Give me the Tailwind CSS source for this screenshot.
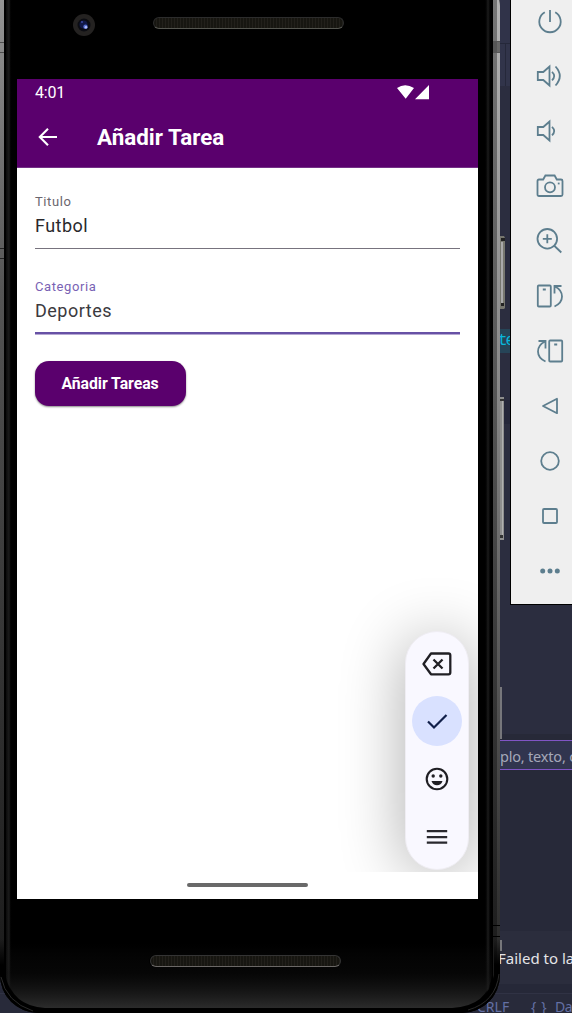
<!DOCTYPE html>
<html lang="es">
<head>
<meta charset="utf-8">
<title>Añadir Tarea</title>
<script src="https://cdn.jsdelivr.net/npm/@tailwindcss/browser@4"></script>
</head>
<body class="relative h-[1013px] w-[572px] overflow-hidden bg-[#282a3a] font-['Roboto',sans-serif]">

<!-- Editor behind the emulator -->
<div class="absolute inset-0 flex flex-col">
  <div class="h-[43px] shrink-0 bg-[#303349]"></div>
  <div class="flex h-[43px] shrink-0 justify-end border-t border-[#25283a] bg-[#31344a]"><div class="mr-[66px] border-l border-[#25283a]"></div></div>
  <div class="h-[243px] shrink-0 bg-[#2b2d3f]"></div>
  <div class="h-6 shrink-0 bg-[#264457] pl-[498px] font-['Liberation_Mono',monospace] text-[16px] leading-6 tracking-[-2px] text-[#08b7da]">te</div>
  <div class="h-[47px] shrink-0 bg-[#2b2d3f]"></div>
  <div class="h-6 shrink-0 bg-[#25273a]"></div>
  <div class="h-[310px] shrink-0 bg-[#2b2d3f]"></div>
  <div class="h-[6px] shrink-0 bg-[#272938]"></div>
  <div class="h-[30px] shrink-0 overflow-hidden whitespace-nowrap border-y border-[#8055c5] bg-[#31354f] pl-[500px] font-['Noto_Sans',sans-serif] text-[14.5px] leading-[30px] tracking-[-0.2px] text-[#a5a8b9]">plo, texto, c</div>
  <div class="h-[161px] shrink-0 bg-[#272939]"></div>
  <div class="h-[53px] shrink-0 overflow-hidden whitespace-nowrap bg-[#2b2d3d] pl-[498px] font-['Noto_Sans',sans-serif] text-[15px] leading-[55px] text-[#e4e4e7]">Failed to la</div>
  <div class="h-[9px] shrink-0 bg-[#262838]"></div>
  <div class="flex h-[20px] shrink-0 overflow-hidden whitespace-nowrap border-t border-[#303244] bg-[#282a3a] pl-[477px] font-['Noto_Sans',sans-serif] text-[14px] leading-[25px] text-[#6470a4]"><span class="w-[54px]">CRLF</span><span class="w-[24px] tracking-[5px]">{}</span><span class="tracking-[-0.5px]">Da</span></div>
</div>
<div class="absolute left-[500px] top-[687px] h-[52px] w-[2px] bg-[#77777b]"></div>
<div class="absolute left-[500px] top-[940px] h-[11px] w-[2px] bg-[#77777b]"></div>

<!-- Hardware buttons -->
<svg class="absolute left-[499px] top-[236px] h-[74px] w-[6px]" viewBox="0 0 6 74"><path fill="#77776f" d="M0 0h5l1 2v70l-1 1H0z"/><path fill="#aaa" d="M2 6h2v61H2z"/><path fill="#222" d="M2 2h4v3H2zM2 67h3v3H2z"/></svg>
<svg class="absolute left-[499px] top-[397px] h-[144px] w-[5px]" viewBox="0 0 5 144"><path fill="#8e8e8e" d="M0 0h5v143H0z"/><path fill="#b0b0b0" d="M3 4h1v134H3z"/><path fill="#333" d="M0 2h5v2H0zM0 138h4v3H0z"/></svg>

<!-- Phone -->
<div class="absolute left-0 top-[-20px] flex h-[1033px] w-[500px] overflow-hidden rounded-tr-[26px] rounded-b-[38px] bg-black">
  <div class="flex w-[17px] shrink-0">
    <div class="w-[4px] bg-linear-to-b from-[#999] via-[#555] via-30% to-[#181818]"><div class="mt-[62px] h-[11px] border-y border-[#333]/70"></div><div class="mt-[195px] h-[11px] border-y border-[#222]"></div></div>
    <div class="w-[2px] bg-black"></div>
    <div class="w-[6px] bg-linear-to-r from-[#0b0b0b] via-[#1c1c1c] to-black"></div>
  </div>
  <div class="flex w-[461px] flex-col">
    <div class="flex h-[99px] shrink-0 pl-[56px]">
      <div class="mt-[34px] flex size-[22px] items-center justify-center rounded-full bg-[#242221]"><svg class="size-[14px]" viewBox="0 0 14 14"><circle cx="7" cy="7" r="6.5" fill="#0b0c12"/><circle cx="6.5" cy="6.5" r="4" fill="#111846"/><circle cx="5" cy="4" r="1" fill="#3a49a4"/><circle cx="8.5" cy="8.8" r="2.2" fill="#536bd0"/><circle cx="9" cy="9.3" r="1.3" fill="#b3c0fb"/></svg></div>
      <div class="ml-[58px] mt-[37px] h-[12px] w-[191px] rounded-full border border-[#2c2c2c] border-b-[#555650] bg-[repeating-linear-gradient(90deg,#171611_0px,#171611_2px,#22201b_2px,#22201b_3px)]"></div>
    </div>
    <div class="flex h-[820px] shrink-0 flex-col bg-white">
      <div class="flex h-[89px] shrink-0 flex-col border-b border-[#743087] bg-[#5a006d] text-white">
        <div class="flex h-[26px] items-center pl-[18px] text-[16px]"><span class="w-[362px] pt-px tracking-[-0.2px]">4:01</span>
          <svg class="h-[16px] w-[34px]" viewBox="0 0 34 16" fill="#fff"><path d="M0 4Q8-1.6 17 4L8.7 14.8zM18 15.3 32 1v14.3z"/></svg>
        </div>
        <div class="flex h-[62px] items-center pb-[1px] pl-[20px]">
          <svg class="mt-[3px] size-[22px]" viewBox="0 0 22 22" fill="none" stroke="#fff" stroke-width="2.1"><path d="M20 11H3.3M11 2.8 2.8 11l8.2 8.2"/></svg>
          <span class="ml-[38px] mt-[3px] text-[22.4px] font-bold leading-7">Añadir Tarea</span>
        </div>
      </div>
      <div class="relative flex h-[704px] shrink-0 flex-col overflow-hidden px-[18px] pt-[25px]">
        <div class="flex h-[56px] shrink-0 flex-col border-b border-[#77737e]">
          <span class="text-[13px] leading-[18px] tracking-[0.6px] text-[#6a666e]">Titulo</span>
          <span class="mt-[2px] text-[18px] leading-[26px] tracking-[0.45px] text-[#29282c]">Futbol</span>
        </div>
        <div class="mt-[29px] flex h-[57px] shrink-0 flex-col">
          <span class="text-[13px] leading-[18px] tracking-[0.6px] text-[#7962b4]">Categoria</span>
          <span class="mt-[2px] text-[18px] leading-[26px] tracking-[0.5px] text-[#3b3a3e]">Deportes</span>
          <div class="mt-auto h-[3px] shrink-0 border-b border-[#b5a8d3] bg-[#6751a5]"></div>
        </div>
        <button class="ml-[-0.5px] mt-[26.4px] h-[44.6px] w-[151px] shrink-0 rounded-[14px] bg-[#5a006d] text-[15.8px] font-bold tracking-[-0.05px] text-white shadow-[0_1px_2px_#0007]">Añadir Tareas</button>
        <div class="absolute left-[388px] top-[463px] flex h-[239px] w-[64px] flex-col items-center rounded-full border border-[#efedf3] bg-[#f9f8ff] shadow-[0_6px_64px_#0005]">
          <svg class="mt-[19.5px] h-[24px] w-[30px]" viewBox="0 0 30 24" fill="none" stroke="#201f24" stroke-width="2.3"><path d="M9 1.5h17.5q1.8 0 1.8 1.8v17.2q0 1.8-1.8 1.8H9L1.5 12zM11.5 7.5l9 9m0-9-9 9" stroke-linejoin="round"/></svg>
          <div class="mt-[20px] flex size-[50px] shrink-0 items-center justify-center rounded-full bg-[#d9e1ff]"><svg class="size-[22px]" viewBox="0 0 22 22" fill="none" stroke="#12204a" stroke-width="2.2"><path d="M2 11.5 8 17.5 20.5 5"/></svg></div>
          <svg class="mt-[21px] size-[24px]" viewBox="0 0 24 24"><circle cx="12" cy="12" r="10.3" fill="none" stroke="#201f24" stroke-width="2.1"/><circle cx="8.2" cy="9" r="1.7" fill="#201f24"/><circle cx="15.8" cy="9" r="1.7" fill="#201f24"/><path d="M6.5 14h11Q16 18.3 12 18.3T6.5 14z" fill="#201f24"/></svg>
          <svg class="mt-[38px] h-[16px] w-[22px]" viewBox="0 0 22 16" fill="#29282e"><path d="M.8 1h20.4v2.2H.8zM.8 7h20.4v2.2H.8zM.8 12.5h20.4v2.2H.8z"/></svg>
        </div>
      </div>
      <div class="flex justify-center pr-px pt-[11px]"><div class="h-[4px] w-[121px] rounded-full bg-[#696969]"></div></div>
    </div>
    <div class="flex h-[114px] justify-center"><div class="z-10 mr-[5px] mt-[56px] h-[12px] w-[191px] rounded-full border border-[#343434] border-b-[#6b6866] bg-[repeating-linear-gradient(90deg,#171611_0px,#171611_2px,#22201b_2px,#22201b_3px)]"></div></div>
  </div>
  <div class="flex w-[22px] shrink-0 pl-[6px]">
    <div class="w-[8px] bg-linear-to-r from-black via-[#1c1c1c] to-black"></div>
    <div class="w-[1px] bg-black"></div>
    <div class="w-[4px] bg-linear-to-b from-[#777] via-[#555] via-40% to-[#171717]"><div class="mt-[61px] h-[12px] border-y border-[#555] bg-[#555]"></div><div class="mt-[872px] h-[12px] border-y border-black"></div></div>
    <div class="w-[3px] bg-linear-to-b from-[#b5b5b5] via-[#888] via-40% to-[#222]"><div class="mt-[61px] h-[12px] border-y border-[#555] bg-[#666]"></div><div class="mt-[872px] h-[12px] border-y border-black"></div></div>
  </div>
</div>
<!-- Curved lower edge of the glass -->
<svg class="pointer-events-none absolute left-0 top-[899px] h-[114px] w-[500px]" viewBox="0 0 500 114" fill="none">
  <defs><linearGradient id="glass" x2="0" y2="1"><stop stop-color="#202020" stop-opacity="0"/><stop offset=".45" stop-color="#141414" stop-opacity=".3"/><stop offset="1" stop-color="#2c2c2c"/></linearGradient>
  <linearGradient id="rim" x2="0" y2="1"><stop stop-color="#000" stop-opacity="0"/><stop offset=".35" stop-color="#000"/></linearGradient></defs>
  <path d="M0 40V76A38 38 0 0 0 38 114H462A38 38 0 0 0 500 76V40H494V76Q488 107 452 109H45Q12 107 5 76V40z" fill="url(#rim)"/>
  <path fill-rule="evenodd" d="M6 45V76Q12 107 45 109H452Q488 107 492 76V45zM155 56H334A6 6 0 0 1 334 68H155A6 6 0 0 1 155 56z" fill="url(#glass)"/>
  <path d="M499 75Q496 103 468 111M1 78Q6 103 33 112" stroke="#2a2a2a"/>
</svg>

<!-- Emulator toolbar -->
<div class="absolute left-[510px] top-0 flex h-[605px] w-[80px] flex-col border-b border-l border-black bg-[#efefef] pl-[24px] pt-[6px]">
  <div class="flex flex-col gap-[25px] text-[#5d7e8e] [&>svg]:size-[30px] [&>svg]:shrink-0">
    <svg viewBox="0 0 30 30" fill="none" stroke="currentColor" stroke-width="1.8"><path d="M15 4v12M9.8 6.2A10.7 10.7 0 1 0 20.2 6.2"/></svg>
    <svg viewBox="0 0 30 30" fill="none" stroke="currentColor" stroke-width="1.8"><path d="M2.8 11h5.5L14.5 5.5v19l-6.2-5.5H2.8zM17 10.8q4.4 4.2 0 8.6M20.5 5.5q8.6 9.5 0 19"/></svg>
    <svg viewBox="0 0 30 30" fill="none" stroke="currentColor" stroke-width="1.8"><path d="M2.8 11h5.5L14.5 5.5v19l-6.2-5.5H2.8zM17 10.8q4.4 4.2 0 8.6"/></svg>
    <svg viewBox="0 0 30 30" fill="none" stroke="currentColor" stroke-width="1.8"><path d="M4 8.5h4.2l2.2-4h9.2l2.2 4H26q1.5 0 1.5 1.5v13.5q0 1.5-1.5 1.5H4q-1.5 0-1.5-1.5V10q0-1.5 1.5-1.5z"/><circle cx="15" cy="16.3" r="5"/><path d="M22.8 12.5h1.8"/></svg>
    <svg viewBox="0 0 30 30" fill="none" stroke="currentColor" stroke-width="1.8"><circle cx="12.3" cy="12.8" r="9.8"/><path d="M12.3 8.3v9M7.8 12.8h9M19 19.5l7.3 7"/></svg>
    <svg viewBox="0 0 30 30" fill="none" stroke="currentColor" stroke-width="1.8"><rect x="2.8" y="4.5" width="13" height="21" rx="1"/><path d="M7.8 8.5h3M19.5 25.5q7.5-3.5 7.5-10T20 5.5M19.5 12.5V5h7"/></svg>
    <svg viewBox="0 0 30 30" fill="none" stroke="currentColor" stroke-width="1.8"><rect x="14.2" y="4.5" width="13" height="21" rx="1"/><path d="M19.2 8.5h3M10.5 25.5q-7.5-3.5-7.5-10T10 5.5M10.5 12.5V5h-7"/></svg>
    <svg viewBox="0 0 30 30" fill="none" stroke="currentColor" stroke-width="1.8" stroke-linejoin="round"><path d="M22 7.8v14.4L8 15z"/></svg>
    <svg viewBox="0 0 30 30" fill="none" stroke="currentColor" stroke-width="1.8"><circle cx="15" cy="15" r="8.8"/></svg>
    <svg viewBox="0 0 30 30" fill="none" stroke="currentColor" stroke-width="1.8"><rect x="8" y="8" width="14" height="14" rx="1"/></svg>
    <svg viewBox="0 0 30 30" fill="currentColor"><circle cx="7.7" cy="15" r="2.5"/><circle cx="15" cy="15" r="2.5"/><circle cx="22.3" cy="15" r="2.5"/></svg>
  </div>
</div>
</body>
</html>
